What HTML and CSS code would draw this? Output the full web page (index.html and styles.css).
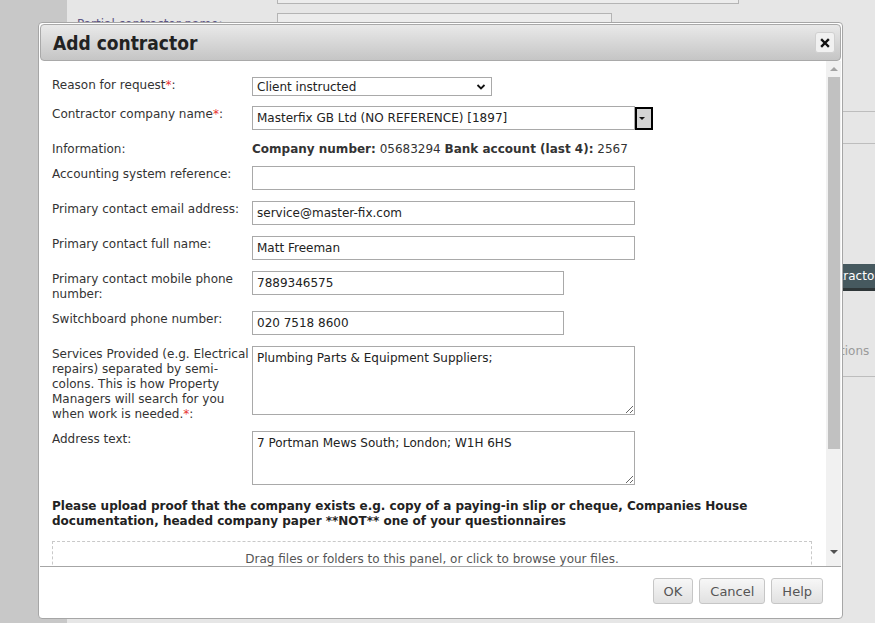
FILE: index.html
```html
<!DOCTYPE html>
<html lang="en">
<head>
  <meta charset="UTF-8" />
  <meta name="viewport" content="width=device-width, initial-scale=1.0" />
  <title>Contractors - Add contractor</title>
  <link rel="stylesheet" href="styles.css">
</head>
<body>
  <div class="page">
    <aside class="sidebar"></aside>
    <main class="main">
      <div class="main-form">
        <div class="bg-row bg-row-top">
          <span class="bg-label"></span>
          <span class="bg-input bg-input-wide"></span>
        </div>
        <div class="bg-row">
          <span class="bg-label">Partial contractor name:</span>
          <span class="bg-input"></span>
        </div>
      </div>
      <div class="side-panel">
        <div class="side-block side-block-tall"></div>
        <div class="side-block"></div>
        <button class="side-button">Add contractor</button>
        <div class="side-link">Options</div>
      </div>
    </main>
  </div>

  <div class="dialog">
    <div class="dialog-title">
      <h2>Add contractor</h2>
      <button class="close-btn" title="Close">
        <svg viewBox="0 0 10 10" width="10" height="10">
          <path d="M2 2 L8 8 M8 2 L2 8" stroke="#111" stroke-width="2.4" stroke-linecap="square" fill="none"/>
        </svg>
      </button>
    </div>

    <div class="dialog-body">
      <div class="dialog-content">
        <div class="row row-first">
          <label class="row-label">Reason for request<span class="req">*</span>:</label>
          <div class="select-wrap">
            <select class="select">
              <option>Client instructed</option>
            </select>
            <svg class="select-arrow" viewBox="0 0 10 6" width="10" height="6">
              <path d="M1.5 1 L5 4.5 L8.5 1" stroke="#111" stroke-width="1.8" fill="none"/>
            </svg>
          </div>
        </div>

        <div class="row row-combo">
          <label class="row-label">Contractor company name<span class="req">*</span>:</label>
          <div class="combo">
            <input class="field field-wide" type="text" value="Masterfix GB Ltd (NO REFERENCE) [1897]" />
            <span class="combo-btn"><span class="combo-caret"></span></span>
          </div>
        </div>

        <div class="row row-info">
          <span class="row-label">Information:</span>
          <span class="info-value"><b>Company number:</b> 05683294 <b>Bank account (last 4):</b> 2567</span>
        </div>

        <div class="row">
          <label class="row-label">Accounting system reference:</label>
          <input class="field field-wide" type="text" value="" />
        </div>

        <div class="row">
          <label class="row-label">Primary contact email address:</label>
          <input class="field field-wide" type="text" value="service@master-fix.com" />
        </div>

        <div class="row">
          <label class="row-label">Primary contact full name:</label>
          <input class="field field-wide" type="text" value="Matt Freeman" />
        </div>

        <div class="row row-double">
          <label class="row-label">Primary contact mobile phone number:</label>
          <input class="field field-mid" type="text" value="7889346575" />
        </div>

        <div class="row">
          <label class="row-label">Switchboard phone number:</label>
          <input class="field field-mid" type="text" value="020 7518 8600" />
        </div>

        <div class="row row-services">
          <label class="row-label">Services Provided (e.g. Electrical repairs) separated by semi-colons. This is how Property Managers will search for you when work is needed.<span class="req">*</span>:</label>
          <textarea class="field field-wide area area-tall">Plumbing Parts &amp; Equipment Suppliers;</textarea>
        </div>

        <div class="row">
          <label class="row-label">Address text:</label>
          <textarea class="field field-wide area area-short">7 Portman Mews South; London; W1H 6HS</textarea>
        </div>

        <p class="upload-note">Please upload proof that the company exists e.g. copy of a paying-in slip or cheque, Companies House documentation, headed company paper **NOT** one of your questionnaires</p>

        <div class="dropzone">Drag files or folders to this panel, or click to browse your files.</div>
      </div>

      <div class="scrollbar">
        <span class="scroll-up"></span>
        <span class="scroll-thumb"></span>
        <span class="scroll-down"></span>
      </div>
    </div>

    <div class="dialog-footer">
      <button class="btn">OK</button>
      <button class="btn">Cancel</button>
      <button class="btn">Help</button>
    </div>
  </div>
</body>
</html>
```

FILE: styles.css
```css
* {
  box-sizing: border-box;
}

html, body {
  margin: 0;
  padding: 0;
}

body {
  font-family: "DejaVu Sans", Verdana, sans-serif;
  font-size: 12px;
  color: #333;
  background-color: #e6e6e6;
  overflow: hidden;
}

/* page behind the dialog */
.page {
  display: flex;
  height: 623px;
}

.sidebar {
  width: 67px;
  flex-shrink: 0;
  background-color: #c8c8c8;
}

.main {
  flex: 1;
  display: flex;
  overflow: hidden;
}

.main-form {
  width: 776px;
  flex-shrink: 0;
}

.bg-row {
  display: flex;
  align-items: center;
  margin-top: 9px;
}

.bg-row-top {
  margin-top: -18px;
}

.bg-label {
  width: 210px;
  padding-left: 10px;
  color: #5f5685;
}

.bg-input {
  width: 335px;
  height: 22px;
  border: 1px solid #b4b4b4;
  background-color: #ececec;
}

.bg-input-wide {
  width: 462px;
}

.side-panel {
  flex: 1;
}

.side-block {
  height: 32px;
  border-bottom: 1px solid #bdbdbd;
}

.side-block-tall {
  height: 112px;
}

.side-button {
  display: block;
  margin: 120px 0 0 -60px;
  width: 160px;
  height: 27px;
  padding: 0 0 0 7px;
  text-align: left;
  border: none;
  border-bottom: 3px solid #2e3638;
  background-color: #46595f;
  color: #fff;
  font: 12px "DejaVu Sans", sans-serif;
  white-space: nowrap;
}

.side-link {
  margin: 53px 0 0 -20px;
  padding-bottom: 17px;
  line-height: 15px;
  color: #9a9a9a;
  border-bottom: 1px solid #bdbdbd;
  white-space: nowrap;
}

/* dialog */
.dialog {
  position: absolute;
  left: 38px;
  top: 22px;
  width: 805px;
  height: 597px;
  padding: 1px;
  display: flex;
  flex-direction: column;
  background-color: #fff;
  border: 1px solid #a6a6a6;
  border-radius: 4px;
}

.dialog-title {
  height: 37px;
  flex-shrink: 0;
  display: flex;
  align-items: center;
  justify-content: space-between;
  padding: 0 5px 0 12px;
  border: 1px solid #a9a9a9;
  border-radius: 4px;
  background: linear-gradient(#e9e9e9, #c5c5c5);
}

.dialog-title h2 {
  margin: 0;
  font-family: "DejaVu Sans Condensed", "DejaVu Sans", sans-serif;
  font-size: 19px;
  font-weight: bold;
  color: #222;
}

.close-btn {
  width: 20px;
  height: 21px;
  padding: 0;
  display: flex;
  align-items: center;
  justify-content: center;
  border: 1px solid #d0d0d0;
  border-radius: 3px;
  background-color: #f1f1f1;
}

.dialog-body {
  flex: 1;
  display: flex;
  min-height: 0;
}

.dialog-content {
  flex: 1;
  overflow: hidden;
  padding: 16px 14px 0 12px;
}

.row {
  display: flex;
  align-items: flex-start;
  margin-bottom: 11px;
}

.row-first {
  margin-bottom: 10px;
}

.row-combo {
  margin-bottom: 12px;
}

.row-info {
  margin-bottom: 9px;
}

.row-double,
.row-services {
  margin-bottom: 9px;
}

.row-label {
  width: 200px;
  flex-shrink: 0;
  padding-top: 1px;
  line-height: 15px;
  color: #333;
}

.row-info .row-label {
  padding-top: 0;
}

.req {
  color: #e8322f;
}

.info-value {
  line-height: 15px;
  color: #333;
}

.info-value b {
  color: #333;
}

.field {
  height: 24px;
  padding: 0 4px;
  border: 1px solid #a9a9a9;
  border-radius: 0;
  font: 12px "DejaVu Sans", sans-serif;
  color: #222;
  background-color: #fff;
  outline: none;
}

.field-wide {
  width: 383px;
}

.field-mid {
  width: 312px;
}

.area {
  display: block;
  padding: 4px 4px;
  line-height: 15px;
}

.area-tall {
  height: 69px;
}

.area-short {
  height: 54px;
}

.select-wrap {
  position: relative;
  width: 240px;
}

.select {
  display: block;
  width: 240px;
  height: 19px;
  padding: 0 4px;
  border: 1px solid #a9a9a9;
  border-radius: 0;
  background-color: #fff;
  font: 12px "DejaVu Sans", sans-serif;
  color: #222;
  appearance: none;
  -webkit-appearance: none;
}

.select-arrow {
  position: absolute;
  right: 6px;
  top: 7px;
}

.combo {
  display: flex;
  align-items: center;
}

.combo-btn {
  width: 18px;
  height: 23px;
  display: flex;
  align-items: center;
  padding-left: 2px;
  border: 2px solid #000;
  background-color: #d4d4d4;
}

.combo-caret {
  width: 0;
  height: 0;
  border-left: 3px solid transparent;
  border-right: 3px solid transparent;
  border-top: 3px solid #111;
}

.upload-note {
  margin: 14px 0 12px;
  line-height: 15px;
  font-weight: bold;
  color: #222;
}

.dropzone {
  height: 80px;
  padding-top: 10px;
  line-height: 15px;
  text-align: center;
  color: #555;
  border: 1px dashed #c9c9c9;
}

.scrollbar {
  width: 15px;
  flex-shrink: 0;
  display: flex;
  flex-direction: column;
  align-items: center;
  background-color: #f1f1f1;
}

.scroll-up {
  margin: 6px 0 6px;
  width: 0;
  height: 0;
  border-left: 4px solid transparent;
  border-right: 4px solid transparent;
  border-bottom: 4px solid #a3a3a3;
}

.scroll-thumb {
  width: 12px;
  height: 372px;
  background-color: #c1c1c1;
}

.scroll-down {
  margin-top: auto;
  margin-bottom: 12px;
  width: 0;
  height: 0;
  border-left: 4px solid transparent;
  border-right: 4px solid transparent;
  border-top: 4px solid #505050;
}

.dialog-footer {
  height: 51px;
  flex-shrink: 0;
  display: flex;
  justify-content: flex-end;
  align-items: flex-start;
  gap: 6px;
  padding: 11px 18px 0 0;
  border-top: 1px solid #a6a6a6;
}

.btn {
  height: 26px;
  padding: 0 10px;
  border: 1px solid #c6c6c6;
  border-radius: 3px;
  background: linear-gradient(#f7f7f7, #e1e1e1);
  color: #555;
  font: 13px "DejaVu Sans", sans-serif;
}
```
